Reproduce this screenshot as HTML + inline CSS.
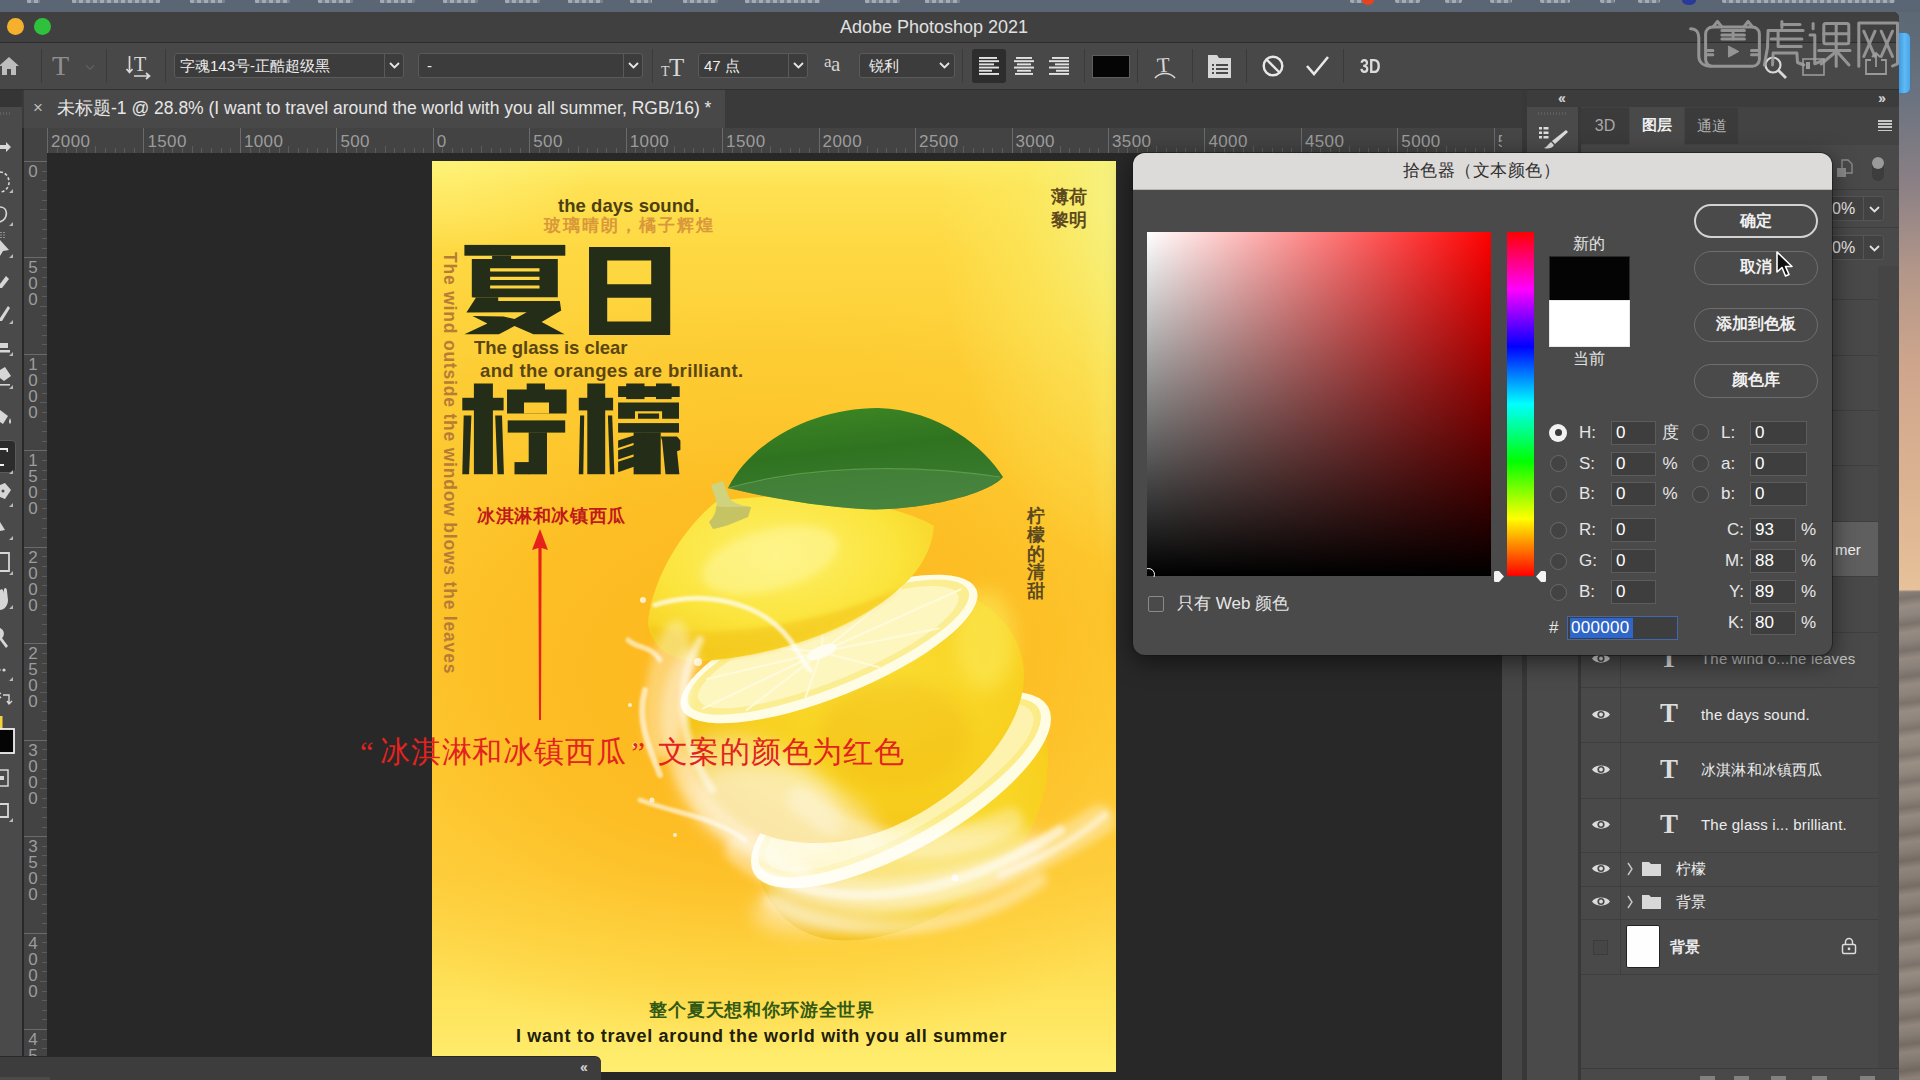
<!DOCTYPE html>
<html>
<head>
<meta charset="utf-8">
<title>Adobe Photoshop 2021</title>
<style>
*{margin:0;padding:0;box-sizing:border-box;}
html,body{width:1920px;height:1080px;overflow:hidden;background:#282828;}
body{font-family:"Liberation Sans",sans-serif;position:relative;color:#ddd;}
.abs{position:absolute;}
#desk{left:0;top:0;width:1920px;height:1080px;background:#5d6976;}
#menubar{left:0;top:0;width:1920px;height:12px;background:#5a6673;overflow:hidden;}
#win{left:0;top:12px;width:1899px;height:1068px;background:#282828;border-top-right-radius:6px;overflow:hidden;}
#titlebar{left:0;top:0;width:1899px;height:31px;background:#404040;border-bottom:1px solid #2c2c2c;}
#title{left:0;top:5px;width:1868px;text-align:center;font-size:18px;color:#e0e0e0;}
.tl{width:17px;height:17px;border-radius:50%;top:6px;}
#optbar{left:0;top:31px;width:1899px;height:47px;background:#484848;border-bottom:1px solid #303030;}
.sep{width:1px;background:#3a3a3a;top:6px;height:34px;}
.dd{background:#3c3c3c;border:1px solid #5a5a5a;border-radius:3px;height:25px;top:10px;color:#eee;font-size:15px;line-height:23px;padding-left:5px;white-space:nowrap;overflow:hidden;}
.dd .arr{position:absolute;right:0;top:0;width:19px;height:23px;border-left:1px solid #5a5a5a;}
.dd .arr svg{position:absolute;left:4px;top:8px;}
#tabstrip{left:22px;top:78px;width:1504px;height:38px;background:#3a3a3a;}
#doctab{left:2px;top:0;width:701px;height:38px;background:#484848;font-size:17.5px;color:#e6e6e6;line-height:36px;white-space:nowrap;}
#toolbar{left:0;top:78px;width:22px;height:990px;background:#4a4a4a;overflow:hidden;}
#hruler{left:24px;top:116px;width:1478px;height:25px;background:#434343;overflow:hidden;}
#vruler{left:24px;top:141px;width:23px;height:904px;background:#434343;overflow:hidden;}
.hr-n{position:absolute;top:4px;font-size:17px;color:#9c9c9c;letter-spacing:0.4px;}
.hr-t{position:absolute;top:0;width:1px;height:25px;background:#6a6a6a;}
.vr-n{position:absolute;left:2px;font-size:17px;color:#9c9c9c;line-height:16px;width:14px;text-align:center;}
.vr-t{position:absolute;left:0;height:1px;width:23px;background:#6a6a6a;}
#canvas{left:47px;top:141px;width:1455px;height:904px;background:#282828;}
</style>
</head>
<body>
<div id="desk" class="abs"></div><!--DESK--><div class="abs" style="left:1899px;top:0;width:21px;height:1080px;background:linear-gradient(180deg,#5c6874 0%,#5f6a77 3%,#6b7380 9%,#8b8085 17%,#b29689 25%,#cfa68c 34%,#dcb391 45%,#e6c199 54.6%,#8f867f 54.8%,#8a817a 62%,#93897f 70%,#857b73 80%,#8e847b 90%,#80776f 100%);"></div>
<div class="abs" style="left:1899px;top:33px;width:11px;height:60px;background:linear-gradient(90deg,#3f9be0,#5fb9f4 50%,#4aa6e8);border-radius:0 5px 5px 0;box-shadow:0 0 2px #2f7fc0;"></div>
<div class="abs" style="left:1899px;top:590px;width:21px;height:490px;background:repeating-linear-gradient(172deg,rgba(60,50,45,0) 0px,rgba(60,50,45,0.22) 9px,rgba(190,175,160,0.18) 17px,rgba(60,50,45,0) 26px);"></div><!--/DESK-->
<div id="menubar" class="abs"><div class="abs" style="left:27px;top:-3px;width:13px;height:6px;background:repeating-linear-gradient(90deg,rgba(235,240,245,0.5) 0 4px,rgba(235,240,245,0.2) 4px 7px);border-radius:1px;filter:blur(0.6px);"></div><div class="abs" style="left:72px;top:-3px;width:88px;height:6px;background:repeating-linear-gradient(90deg,rgba(235,240,245,0.5) 0 4px,rgba(235,240,245,0.2) 4px 7px);border-radius:1px;filter:blur(0.6px);"></div><div class="abs" style="left:190px;top:-3px;width:35px;height:6px;background:repeating-linear-gradient(90deg,rgba(235,240,245,0.5) 0 4px,rgba(235,240,245,0.2) 4px 7px);border-radius:1px;filter:blur(0.6px);"></div><div class="abs" style="left:255px;top:-3px;width:35px;height:6px;background:repeating-linear-gradient(90deg,rgba(235,240,245,0.5) 0 4px,rgba(235,240,245,0.2) 4px 7px);border-radius:1px;filter:blur(0.6px);"></div><div class="abs" style="left:318px;top:-3px;width:35px;height:6px;background:repeating-linear-gradient(90deg,rgba(235,240,245,0.5) 0 4px,rgba(235,240,245,0.2) 4px 7px);border-radius:1px;filter:blur(0.6px);"></div><div class="abs" style="left:380px;top:-3px;width:35px;height:6px;background:repeating-linear-gradient(90deg,rgba(235,240,245,0.5) 0 4px,rgba(235,240,245,0.2) 4px 7px);border-radius:1px;filter:blur(0.6px);"></div><div class="abs" style="left:443px;top:-3px;width:35px;height:6px;background:repeating-linear-gradient(90deg,rgba(235,240,245,0.5) 0 4px,rgba(235,240,245,0.2) 4px 7px);border-radius:1px;filter:blur(0.6px);"></div><div class="abs" style="left:505px;top:-3px;width:35px;height:6px;background:repeating-linear-gradient(90deg,rgba(235,240,245,0.5) 0 4px,rgba(235,240,245,0.2) 4px 7px);border-radius:1px;filter:blur(0.6px);"></div><div class="abs" style="left:568px;top:-3px;width:35px;height:6px;background:repeating-linear-gradient(90deg,rgba(235,240,245,0.5) 0 4px,rgba(235,240,245,0.2) 4px 7px);border-radius:1px;filter:blur(0.6px);"></div><div class="abs" style="left:630px;top:-3px;width:22px;height:6px;background:repeating-linear-gradient(90deg,rgba(235,240,245,0.5) 0 4px,rgba(235,240,245,0.2) 4px 7px);border-radius:1px;filter:blur(0.6px);"></div><div class="abs" style="left:683px;top:-3px;width:35px;height:6px;background:repeating-linear-gradient(90deg,rgba(235,240,245,0.5) 0 4px,rgba(235,240,245,0.2) 4px 7px);border-radius:1px;filter:blur(0.6px);"></div><div class="abs" style="left:745px;top:-3px;width:75px;height:6px;background:repeating-linear-gradient(90deg,rgba(235,240,245,0.5) 0 4px,rgba(235,240,245,0.2) 4px 7px);border-radius:1px;filter:blur(0.6px);"></div><div class="abs" style="left:865px;top:-3px;width:35px;height:6px;background:repeating-linear-gradient(90deg,rgba(235,240,245,0.5) 0 4px,rgba(235,240,245,0.2) 4px 7px);border-radius:1px;filter:blur(0.6px);"></div><div class="abs" style="left:925px;top:-3px;width:35px;height:6px;background:repeating-linear-gradient(90deg,rgba(235,240,245,0.5) 0 4px,rgba(235,240,245,0.2) 4px 7px);border-radius:1px;filter:blur(0.6px);"></div><div class="abs" style="left:1350px;top:-3px;width:18px;height:6px;background:repeating-linear-gradient(90deg,rgba(235,240,245,0.5) 0 4px,rgba(235,240,245,0.2) 4px 7px);border-radius:2px;filter:blur(0.6px);"></div><div class="abs" style="left:1395px;top:-3px;width:25px;height:6px;background:repeating-linear-gradient(90deg,rgba(235,240,245,0.5) 0 4px,rgba(235,240,245,0.2) 4px 7px);border-radius:2px;filter:blur(0.6px);"></div><div class="abs" style="left:1445px;top:-3px;width:17px;height:6px;background:repeating-linear-gradient(90deg,rgba(235,240,245,0.5) 0 4px,rgba(235,240,245,0.2) 4px 7px);border-radius:2px;filter:blur(0.6px);"></div><div class="abs" style="left:1490px;top:-3px;width:22px;height:6px;background:repeating-linear-gradient(90deg,rgba(235,240,245,0.5) 0 4px,rgba(235,240,245,0.2) 4px 7px);border-radius:2px;filter:blur(0.6px);"></div><div class="abs" style="left:1540px;top:-3px;width:30px;height:6px;background:repeating-linear-gradient(90deg,rgba(235,240,245,0.5) 0 4px,rgba(235,240,245,0.2) 4px 7px);border-radius:2px;filter:blur(0.6px);"></div><div class="abs" style="left:1600px;top:-3px;width:15px;height:6px;background:repeating-linear-gradient(90deg,rgba(235,240,245,0.5) 0 4px,rgba(235,240,245,0.2) 4px 7px);border-radius:2px;filter:blur(0.6px);"></div><div class="abs" style="left:1638px;top:-3px;width:22px;height:6px;background:repeating-linear-gradient(90deg,rgba(235,240,245,0.5) 0 4px,rgba(235,240,245,0.2) 4px 7px);border-radius:2px;filter:blur(0.6px);"></div><div class="abs" style="left:1722px;top:-3px;width:173px;height:6px;background:repeating-linear-gradient(90deg,rgba(235,240,245,0.5) 0 4px,rgba(235,240,245,0.2) 4px 7px);border-radius:2px;filter:blur(0.6px);"></div><div class="abs" style="left:1362px;top:-5px;width:12px;height:10px;border-radius:50%;background:#e8431f;"></div><div class="abs" style="left:1682px;top:-4px;width:14px;height:9px;border-radius:50%;background:#2a3a9a;"></div></div><!--/MB-->
<div id="win" class="abs">
  <div id="titlebar" class="abs">
    <div class="abs tl" style="left:7px;background:#f5b12d;"></div>
    <div class="abs tl" style="left:34px;background:#2fc13c;"></div>
    <div class="abs tl" style="left:-21px;background:#ee5d55;"></div>
    <div id="title" class="abs">Adobe Photoshop 2021</div>
  </div>
  <div id="optbar" class="abs"><!--OPT--><svg class="abs" style="left:-2px;top:12px" width="22" height="22" viewBox="0 0 22 22"><path d="M11,2 L21,11 L18,11 L18,20 L13,20 L13,14 L9,14 L9,20 L4,20 L4,11 L1,11 Z" fill="#bdbdbd"/></svg><div class="abs sep" style="left:41px"></div><div class="abs sep" style="left:106px"></div><div class="abs sep" style="left:165px"></div><div class="abs sep" style="left:652px"></div><div class="abs sep" style="left:962px"></div><div class="abs sep" style="left:1084px"></div><div class="abs sep" style="left:1137px"></div><div class="abs sep" style="left:1192px"></div><div class="abs sep" style="left:1246px"></div><div class="abs sep" style="left:1343px"></div><div class="abs" style="left:52px;top:7px;font-family:'Liberation Serif',serif;font-size:28px;color:#8f8f8f;line-height:32px;">T</div><svg class="abs" style="left:85px;top:21px" width="10" height="7" viewBox="0 0 11 7"><path d="M1,1 L5.5,5.5 L10,1" stroke="#5e5e5e" stroke-width="1.6" fill="none"/></svg><svg class="abs" style="left:125px;top:11px" width="28" height="26" viewBox="0 0 28 26"><g stroke="#d8d8d8" fill="none" stroke-width="1.7"><path d="M4.5,2 V18 M1.5,15 L4.5,18.5 L7.5,15"/><path d="M9,22 H24 M21,19 L24.5,22 L21,25"/></g><text x="9" y="17" font-family="Liberation Serif" font-size="20" fill="#d8d8d8">T</text></svg><div class="abs dd" style="left:174px;width:230px;">字魂143号-正酷超级黑<span class="arr" style="width:19px;"><svg width="11" height="7" viewBox="0 0 11 7"><path d="M1,1 L5.5,5.5 L10,1" stroke="#e6e6e6" stroke-width="1.8" fill="none"/></svg></span></div><div class="abs dd" style="left:418px;width:225px;"><span style="padding-left:3px">-</span><span class="arr" style="width:19px;"><svg width="11" height="7" viewBox="0 0 11 7"><path d="M1,1 L5.5,5.5 L10,1" stroke="#e6e6e6" stroke-width="1.8" fill="none"/></svg></span></div><svg class="abs" style="left:660px;top:12px" width="28" height="24" viewBox="0 0 28 24"><text x="1" y="21" font-family="Liberation Serif" font-size="14" fill="#d8d8d8">T</text><text x="9" y="21" font-family="Liberation Serif" font-size="25" fill="#d8d8d8">T</text></svg><div class="abs dd" style="left:698px;width:110px;">47 点<span class="arr" style="width:19px;"><svg width="11" height="7" viewBox="0 0 11 7"><path d="M1,1 L5.5,5.5 L10,1" stroke="#e6e6e6" stroke-width="1.8" fill="none"/></svg></span></div><div class="abs" style="left:824px;top:9px;font-family:'Liberation Serif',serif;font-size:21px;color:#d4d4d4;line-height:24px;letter-spacing:-0.5px;"><span style="font-size:17px;position:relative;top:-4px">a</span>a</div><div class="abs dd" style="left:859px;width:96px;"><span style="padding-left:4px">锐利</span><span class="arr" style="width:19px;border-left:none;"><svg width="11" height="7" viewBox="0 0 11 7"><path d="M1,1 L5.5,5.5 L10,1" stroke="#e6e6e6" stroke-width="1.8" fill="none"/></svg></span></div><div class="abs" style="left:972px;top:6px;width:34px;height:34px;background:#2d2d2d;border-radius:3px;"></div><svg class="abs" style="left:978px;top:13px" width="22" height="22" viewBox="0 0 22 22"><g fill="#e2e2e2"><rect x="1" y="1.0" width="18" height="1.9"/><rect x="1" y="4.2" width="20" height="1.9"/><rect x="1" y="7.4" width="15" height="1.9"/><rect x="1" y="10.6" width="20" height="1.9"/><rect x="1" y="13.8" width="13" height="1.9"/><rect x="1" y="17.0" width="20" height="1.9"/></g></svg><svg class="abs" style="left:1013px;top:13px" width="22" height="22" viewBox="0 0 22 22"><g fill="#e2e2e2"><rect x="3.0" y="1.0" width="16" height="1.9"/><rect x="1.0" y="4.2" width="20" height="1.9"/><rect x="4.0" y="7.4" width="14" height="1.9"/><rect x="1.0" y="10.6" width="20" height="1.9"/><rect x="4.0" y="13.8" width="14" height="1.9"/><rect x="2.0" y="17.0" width="18" height="1.9"/></g></svg><svg class="abs" style="left:1048px;top:13px" width="22" height="22" viewBox="0 0 22 22"><g fill="#e2e2e2"><rect x="4" y="1.0" width="17" height="1.9"/><rect x="1" y="4.2" width="20" height="1.9"/><rect x="7" y="7.4" width="14" height="1.9"/><rect x="1" y="10.6" width="20" height="1.9"/><rect x="8" y="13.8" width="13" height="1.9"/><rect x="1" y="17.0" width="20" height="1.9"/></g></svg><div class="abs" style="left:1092px;top:12px;width:38px;height:23px;background:#050505;border:1px solid #5e5e5e;"></div><svg class="abs" style="left:1152px;top:10px" width="26" height="28" viewBox="0 0 26 28"><text x="5" y="19" font-family="Liberation Serif" font-size="21" fill="#d8d8d8" transform="rotate(-4 12 12)">T</text><path d="M3,25 C8,19 18,19 23,25" stroke="#d8d8d8" stroke-width="1.6" fill="none"/></svg><svg class="abs" style="left:1207px;top:11px" width="25" height="25" viewBox="0 0 25 25"><path d="M1,1 H10 L12,4 H24 V24 H1 Z" fill="#d6d6d6"/><g fill="#484848"><rect x="5" y="10" width="2" height="2"/><rect x="9" y="10" width="12" height="2"/><rect x="5" y="14" width="2" height="2"/><rect x="9" y="14" width="12" height="2"/><rect x="5" y="18" width="2" height="2"/><rect x="9" y="18" width="12" height="2"/></g></svg><svg class="abs" style="left:1261px;top:11px" width="24" height="24" viewBox="0 0 24 24"><circle cx="12" cy="12" r="9.3" stroke="#e8e8e8" stroke-width="2.4" fill="none"/><path d="M5.5,5.5 L18.5,18.5" stroke="#e8e8e8" stroke-width="2.4"/></svg><svg class="abs" style="left:1305px;top:12px" width="26" height="22" viewBox="0 0 26 22"><path d="M2,11 L9,19 L23,2" stroke="#e8e8e8" stroke-width="2.6" fill="none"/></svg><div class="abs" style="left:1360px;top:10px;font-size:20px;font-weight:bold;color:#dcdcdc;line-height:26px;transform:scaleX(0.8);transform-origin:0 0;">3D</div><svg class="abs" style="left:1762px;top:11px" width="26" height="26" viewBox="0 0 26 26"><circle cx="11" cy="11" r="7.5" stroke="#d8d8d8" stroke-width="2.2" fill="none"/><path d="M16.5,16.5 L24,24" stroke="#d8d8d8" stroke-width="2.8"/></svg><svg class="abs" style="left:1802px;top:14px" width="24" height="20" viewBox="0 0 24 20"><rect x="1" y="2" width="21" height="16" stroke="#9a9a9a" stroke-width="1.6" fill="none"/><rect x="4" y="5" width="4" height="7" fill="#9a9a9a"/></svg><svg class="abs" style="left:1864px;top:7px" width="24" height="26" viewBox="0 0 24 26"><path d="M7,10 H2 V24 H22 V10 H17" stroke="#9a9a9a" stroke-width="1.8" fill="none"/><path d="M12,17 V3 M8,7 L12,3 L16,7" stroke="#9a9a9a" stroke-width="1.8" fill="none"/></svg><!--/OPT--></div>
  <div id="toolbar" class="abs"><!--TOOLS--><div class="abs" style="left:0;top:0;width:22px;height:17px;background:#353535;"></div><div class="abs" style="left:0;top:22px;width:10px;height:3px;background:repeating-linear-gradient(90deg,#606060 0 1px,transparent 1px 3px);"></div><div class="abs" style="left:-4px;top:350px;width:20px;height:33px;background:#2c2c2c;border-radius:4px;border:1px solid #5a5a5a;"></div><svg class="abs" style="left:0;top:0" width="22" height="990" viewBox="0 90 22 990"><g fill="#d6d6d6" stroke="none"><path d="M0,145 H6 V142 L11,147 L6,152 V149 H0Z"/><path d="M0,172 a9,10 0 0 1 0,20" fill="none" stroke="#d6d6d6" stroke-width="1.6" stroke-dasharray="3 2"/><path d="M0,207 C8,207 9,218 0,222" fill="none" stroke="#d6d6d6" stroke-width="1.7"/><path d="M0,240 L9,250 L3,251 L0,256Z"/><path d="M1,232 V238 M4,232 V238" stroke="#d6d6d6" stroke-width="1" stroke-dasharray="1 1.5"/><path d="M0,284 L6,276 L9,279 L2,288 L0,288Z"/><path d="M0,318 L8,306 L10,308 L2,321 L0,321Z"/><rect x="0" y="343" width="8" height="5"/><rect x="0" y="350" width="10" height="2.5"/><path d="M0,370 L5,367 L11,376 L4,381 L0,378Z"/><rect x="0" y="384" width="10" height="1.6"/><path d="M0,410 L8,416 L3,424 L0,422Z"/><path d="M10,418 q2,4 0,6 q-2,-2 0,-6Z"/><path d="M0,448 H8 V452 H6.5 V450 H0Z M0,464 H4 V466 H0Z" fill="#f0f0f0"/><path d="M0,485 L5,483 L11,490 L5,499 L0,497Z"/><circle cx="3" cy="491" r="1.5" fill="#4a4a4a"/><path d="M0,522 L5,530 L0,531Z"/><path d="M0,553 H9 V571 H0" fill="none" stroke="#d6d6d6" stroke-width="1.8"/><path d="M0,590 C2,588 4,590 4,594 L4,589 C5,587 7,588 7,591 L8,600 C8,606 4,610 0,610Z"/><path d="M0,628 a6,6 0 0 1 2,10 L8,646 L6,648 L0,640Z"/><circle cx="4" cy="670" r="1.6"/><circle cx="-1" cy="670" r="1.6"/><path d="M3,695 H9 V703 M1,693 L-2,695 L1,698 M7,701 L9,704 L12,701" fill="none" stroke="#d6d6d6" stroke-width="1.4"/><rect x="0" y="716" width="2.5" height="20" fill="#f3d33c"/><rect x="-3" y="729" width="17" height="24" fill="#050505" stroke="#f0f0f0" stroke-width="1.8"/><rect x="-4" y="770" width="12" height="16" fill="none" stroke="#d6d6d6" stroke-width="1.5"/><rect x="0" y="776" width="4" height="4"/><path d="M0,804 H8 V817 H0" fill="none" stroke="#d6d6d6" stroke-width="1.8"/><path d="M13,193 L13,189 L9,193Z" fill="#b8b8b8"/><path d="M13,226 L13,222 L9,226Z" fill="#b8b8b8"/><path d="M13,258 L13,254 L9,258Z" fill="#b8b8b8"/><path d="M13,324 L13,320 L9,324Z" fill="#b8b8b8"/><path d="M13,356 L13,352 L9,356Z" fill="#b8b8b8"/><path d="M13,389 L13,385 L9,389Z" fill="#b8b8b8"/><path d="M13,474 L13,470 L9,474Z" fill="#b8b8b8"/><path d="M13,507 L13,503 L9,507Z" fill="#b8b8b8"/><path d="M13,540 L13,536 L9,540Z" fill="#b8b8b8"/><path d="M13,575 L13,571 L9,575Z" fill="#b8b8b8"/><path d="M13,609 L13,605 L9,609Z" fill="#b8b8b8"/><path d="M13,681 L13,677 L9,681Z" fill="#b8b8b8"/><path d="M13,822 L13,818 L9,822Z" fill="#b8b8b8"/></g></svg><!--/TOOLS--></div>
  <div id="tabstrip" class="abs">
    <div id="doctab" class="abs"><span style="position:absolute;left:9px;top:0;color:#bdbdbd;font-size:17px;">×</span><span style="position:absolute;left:33px;top:0;">未标题-1 @ 28.8% (I want to travel around the world with you all summer, RGB/16) *</span></div>
  </div>
  <div id="hruler" class="abs"><!--HR--><div class="hr-t" style="left:23.0px"></div><div class="hr-n" style="left:27.0px">2000</div><div class="hr-t" style="left:32.6px;top:20px;height:5px;background:#5c5c5c"></div><div class="hr-t" style="left:42.3px;top:20px;height:5px;background:#5c5c5c"></div><div class="hr-t" style="left:51.9px;top:20px;height:5px;background:#5c5c5c"></div><div class="hr-t" style="left:61.6px;top:20px;height:5px;background:#5c5c5c"></div><div class="hr-t" style="left:71.2px;top:18px;height:7px;background:#5c5c5c"></div><div class="hr-t" style="left:80.9px;top:20px;height:5px;background:#5c5c5c"></div><div class="hr-t" style="left:90.5px;top:20px;height:5px;background:#5c5c5c"></div><div class="hr-t" style="left:100.2px;top:20px;height:5px;background:#5c5c5c"></div><div class="hr-t" style="left:109.8px;top:20px;height:5px;background:#5c5c5c"></div><div class="hr-t" style="left:119.4px"></div><div class="hr-n" style="left:123.4px">1500</div><div class="hr-t" style="left:129.1px;top:20px;height:5px;background:#5c5c5c"></div><div class="hr-t" style="left:138.7px;top:20px;height:5px;background:#5c5c5c"></div><div class="hr-t" style="left:148.4px;top:20px;height:5px;background:#5c5c5c"></div><div class="hr-t" style="left:158.0px;top:20px;height:5px;background:#5c5c5c"></div><div class="hr-t" style="left:167.7px;top:18px;height:7px;background:#5c5c5c"></div><div class="hr-t" style="left:177.3px;top:20px;height:5px;background:#5c5c5c"></div><div class="hr-t" style="left:187.0px;top:20px;height:5px;background:#5c5c5c"></div><div class="hr-t" style="left:196.6px;top:20px;height:5px;background:#5c5c5c"></div><div class="hr-t" style="left:206.3px;top:20px;height:5px;background:#5c5c5c"></div><div class="hr-t" style="left:215.9px"></div><div class="hr-n" style="left:219.9px">1000</div><div class="hr-t" style="left:225.5px;top:20px;height:5px;background:#5c5c5c"></div><div class="hr-t" style="left:235.2px;top:20px;height:5px;background:#5c5c5c"></div><div class="hr-t" style="left:244.8px;top:20px;height:5px;background:#5c5c5c"></div><div class="hr-t" style="left:254.5px;top:20px;height:5px;background:#5c5c5c"></div><div class="hr-t" style="left:264.1px;top:18px;height:7px;background:#5c5c5c"></div><div class="hr-t" style="left:273.8px;top:20px;height:5px;background:#5c5c5c"></div><div class="hr-t" style="left:283.4px;top:20px;height:5px;background:#5c5c5c"></div><div class="hr-t" style="left:293.1px;top:20px;height:5px;background:#5c5c5c"></div><div class="hr-t" style="left:302.7px;top:20px;height:5px;background:#5c5c5c"></div><div class="hr-t" style="left:312.4px"></div><div class="hr-n" style="left:316.4px">500</div><div class="hr-t" style="left:322.0px;top:20px;height:5px;background:#5c5c5c"></div><div class="hr-t" style="left:331.6px;top:20px;height:5px;background:#5c5c5c"></div><div class="hr-t" style="left:341.3px;top:20px;height:5px;background:#5c5c5c"></div><div class="hr-t" style="left:350.9px;top:20px;height:5px;background:#5c5c5c"></div><div class="hr-t" style="left:360.6px;top:18px;height:7px;background:#5c5c5c"></div><div class="hr-t" style="left:370.2px;top:20px;height:5px;background:#5c5c5c"></div><div class="hr-t" style="left:379.9px;top:20px;height:5px;background:#5c5c5c"></div><div class="hr-t" style="left:389.5px;top:20px;height:5px;background:#5c5c5c"></div><div class="hr-t" style="left:399.2px;top:20px;height:5px;background:#5c5c5c"></div><div class="hr-t" style="left:408.8px"></div><div class="hr-n" style="left:412.8px">0</div><div class="hr-t" style="left:418.4px;top:20px;height:5px;background:#5c5c5c"></div><div class="hr-t" style="left:428.1px;top:20px;height:5px;background:#5c5c5c"></div><div class="hr-t" style="left:437.7px;top:20px;height:5px;background:#5c5c5c"></div><div class="hr-t" style="left:447.4px;top:20px;height:5px;background:#5c5c5c"></div><div class="hr-t" style="left:457.0px;top:18px;height:7px;background:#5c5c5c"></div><div class="hr-t" style="left:466.7px;top:20px;height:5px;background:#5c5c5c"></div><div class="hr-t" style="left:476.3px;top:20px;height:5px;background:#5c5c5c"></div><div class="hr-t" style="left:486.0px;top:20px;height:5px;background:#5c5c5c"></div><div class="hr-t" style="left:495.6px;top:20px;height:5px;background:#5c5c5c"></div><div class="hr-t" style="left:505.2px"></div><div class="hr-n" style="left:509.2px">500</div><div class="hr-t" style="left:514.9px;top:20px;height:5px;background:#5c5c5c"></div><div class="hr-t" style="left:524.5px;top:20px;height:5px;background:#5c5c5c"></div><div class="hr-t" style="left:534.2px;top:20px;height:5px;background:#5c5c5c"></div><div class="hr-t" style="left:543.8px;top:20px;height:5px;background:#5c5c5c"></div><div class="hr-t" style="left:553.5px;top:18px;height:7px;background:#5c5c5c"></div><div class="hr-t" style="left:563.1px;top:20px;height:5px;background:#5c5c5c"></div><div class="hr-t" style="left:572.8px;top:20px;height:5px;background:#5c5c5c"></div><div class="hr-t" style="left:582.4px;top:20px;height:5px;background:#5c5c5c"></div><div class="hr-t" style="left:592.1px;top:20px;height:5px;background:#5c5c5c"></div><div class="hr-t" style="left:601.7px"></div><div class="hr-n" style="left:605.7px">1000</div><div class="hr-t" style="left:611.3px;top:20px;height:5px;background:#5c5c5c"></div><div class="hr-t" style="left:621.0px;top:20px;height:5px;background:#5c5c5c"></div><div class="hr-t" style="left:630.6px;top:20px;height:5px;background:#5c5c5c"></div><div class="hr-t" style="left:640.3px;top:20px;height:5px;background:#5c5c5c"></div><div class="hr-t" style="left:649.9px;top:18px;height:7px;background:#5c5c5c"></div><div class="hr-t" style="left:659.6px;top:20px;height:5px;background:#5c5c5c"></div><div class="hr-t" style="left:669.2px;top:20px;height:5px;background:#5c5c5c"></div><div class="hr-t" style="left:678.9px;top:20px;height:5px;background:#5c5c5c"></div><div class="hr-t" style="left:688.5px;top:20px;height:5px;background:#5c5c5c"></div><div class="hr-t" style="left:698.1px"></div><div class="hr-n" style="left:702.1px">1500</div><div class="hr-t" style="left:707.8px;top:20px;height:5px;background:#5c5c5c"></div><div class="hr-t" style="left:717.4px;top:20px;height:5px;background:#5c5c5c"></div><div class="hr-t" style="left:727.1px;top:20px;height:5px;background:#5c5c5c"></div><div class="hr-t" style="left:736.7px;top:20px;height:5px;background:#5c5c5c"></div><div class="hr-t" style="left:746.4px;top:18px;height:7px;background:#5c5c5c"></div><div class="hr-t" style="left:756.0px;top:20px;height:5px;background:#5c5c5c"></div><div class="hr-t" style="left:765.7px;top:20px;height:5px;background:#5c5c5c"></div><div class="hr-t" style="left:775.3px;top:20px;height:5px;background:#5c5c5c"></div><div class="hr-t" style="left:785.0px;top:20px;height:5px;background:#5c5c5c"></div><div class="hr-t" style="left:794.6px"></div><div class="hr-n" style="left:798.6px">2000</div><div class="hr-t" style="left:804.2px;top:20px;height:5px;background:#5c5c5c"></div><div class="hr-t" style="left:813.9px;top:20px;height:5px;background:#5c5c5c"></div><div class="hr-t" style="left:823.5px;top:20px;height:5px;background:#5c5c5c"></div><div class="hr-t" style="left:833.2px;top:20px;height:5px;background:#5c5c5c"></div><div class="hr-t" style="left:842.8px;top:18px;height:7px;background:#5c5c5c"></div><div class="hr-t" style="left:852.5px;top:20px;height:5px;background:#5c5c5c"></div><div class="hr-t" style="left:862.1px;top:20px;height:5px;background:#5c5c5c"></div><div class="hr-t" style="left:871.8px;top:20px;height:5px;background:#5c5c5c"></div><div class="hr-t" style="left:881.4px;top:20px;height:5px;background:#5c5c5c"></div><div class="hr-t" style="left:891.1px"></div><div class="hr-n" style="left:895.1px">2500</div><div class="hr-t" style="left:900.7px;top:20px;height:5px;background:#5c5c5c"></div><div class="hr-t" style="left:910.3px;top:20px;height:5px;background:#5c5c5c"></div><div class="hr-t" style="left:920.0px;top:20px;height:5px;background:#5c5c5c"></div><div class="hr-t" style="left:929.6px;top:20px;height:5px;background:#5c5c5c"></div><div class="hr-t" style="left:939.3px;top:18px;height:7px;background:#5c5c5c"></div><div class="hr-t" style="left:948.9px;top:20px;height:5px;background:#5c5c5c"></div><div class="hr-t" style="left:958.6px;top:20px;height:5px;background:#5c5c5c"></div><div class="hr-t" style="left:968.2px;top:20px;height:5px;background:#5c5c5c"></div><div class="hr-t" style="left:977.9px;top:20px;height:5px;background:#5c5c5c"></div><div class="hr-t" style="left:987.5px"></div><div class="hr-n" style="left:991.5px">3000</div><div class="hr-t" style="left:997.1px;top:20px;height:5px;background:#5c5c5c"></div><div class="hr-t" style="left:1006.8px;top:20px;height:5px;background:#5c5c5c"></div><div class="hr-t" style="left:1016.4px;top:20px;height:5px;background:#5c5c5c"></div><div class="hr-t" style="left:1026.1px;top:20px;height:5px;background:#5c5c5c"></div><div class="hr-t" style="left:1035.7px;top:18px;height:7px;background:#5c5c5c"></div><div class="hr-t" style="left:1045.4px;top:20px;height:5px;background:#5c5c5c"></div><div class="hr-t" style="left:1055.0px;top:20px;height:5px;background:#5c5c5c"></div><div class="hr-t" style="left:1064.7px;top:20px;height:5px;background:#5c5c5c"></div><div class="hr-t" style="left:1074.3px;top:20px;height:5px;background:#5c5c5c"></div><div class="hr-t" style="left:1084.0px"></div><div class="hr-n" style="left:1088.0px">3500</div><div class="hr-t" style="left:1093.6px;top:20px;height:5px;background:#5c5c5c"></div><div class="hr-t" style="left:1103.2px;top:20px;height:5px;background:#5c5c5c"></div><div class="hr-t" style="left:1112.9px;top:20px;height:5px;background:#5c5c5c"></div><div class="hr-t" style="left:1122.5px;top:20px;height:5px;background:#5c5c5c"></div><div class="hr-t" style="left:1132.2px;top:18px;height:7px;background:#5c5c5c"></div><div class="hr-t" style="left:1141.8px;top:20px;height:5px;background:#5c5c5c"></div><div class="hr-t" style="left:1151.5px;top:20px;height:5px;background:#5c5c5c"></div><div class="hr-t" style="left:1161.1px;top:20px;height:5px;background:#5c5c5c"></div><div class="hr-t" style="left:1170.8px;top:20px;height:5px;background:#5c5c5c"></div><div class="hr-t" style="left:1180.4px"></div><div class="hr-n" style="left:1184.4px">4000</div><div class="hr-t" style="left:1190.0px;top:20px;height:5px;background:#5c5c5c"></div><div class="hr-t" style="left:1199.7px;top:20px;height:5px;background:#5c5c5c"></div><div class="hr-t" style="left:1209.3px;top:20px;height:5px;background:#5c5c5c"></div><div class="hr-t" style="left:1219.0px;top:20px;height:5px;background:#5c5c5c"></div><div class="hr-t" style="left:1228.6px;top:18px;height:7px;background:#5c5c5c"></div><div class="hr-t" style="left:1238.3px;top:20px;height:5px;background:#5c5c5c"></div><div class="hr-t" style="left:1247.9px;top:20px;height:5px;background:#5c5c5c"></div><div class="hr-t" style="left:1257.6px;top:20px;height:5px;background:#5c5c5c"></div><div class="hr-t" style="left:1267.2px;top:20px;height:5px;background:#5c5c5c"></div><div class="hr-t" style="left:1276.9px"></div><div class="hr-n" style="left:1280.9px">4500</div><div class="hr-t" style="left:1286.5px;top:20px;height:5px;background:#5c5c5c"></div><div class="hr-t" style="left:1296.1px;top:20px;height:5px;background:#5c5c5c"></div><div class="hr-t" style="left:1305.8px;top:20px;height:5px;background:#5c5c5c"></div><div class="hr-t" style="left:1315.4px;top:20px;height:5px;background:#5c5c5c"></div><div class="hr-t" style="left:1325.1px;top:18px;height:7px;background:#5c5c5c"></div><div class="hr-t" style="left:1334.7px;top:20px;height:5px;background:#5c5c5c"></div><div class="hr-t" style="left:1344.4px;top:20px;height:5px;background:#5c5c5c"></div><div class="hr-t" style="left:1354.0px;top:20px;height:5px;background:#5c5c5c"></div><div class="hr-t" style="left:1363.7px;top:20px;height:5px;background:#5c5c5c"></div><div class="hr-t" style="left:1373.3px"></div><div class="hr-n" style="left:1377.3px">5000</div><div class="hr-t" style="left:1382.9px;top:20px;height:5px;background:#5c5c5c"></div><div class="hr-t" style="left:1392.6px;top:20px;height:5px;background:#5c5c5c"></div><div class="hr-t" style="left:1402.2px;top:20px;height:5px;background:#5c5c5c"></div><div class="hr-t" style="left:1411.9px;top:20px;height:5px;background:#5c5c5c"></div><div class="hr-t" style="left:1421.5px;top:18px;height:7px;background:#5c5c5c"></div><div class="hr-t" style="left:1431.2px;top:20px;height:5px;background:#5c5c5c"></div><div class="hr-t" style="left:1440.8px;top:20px;height:5px;background:#5c5c5c"></div><div class="hr-t" style="left:1450.5px;top:20px;height:5px;background:#5c5c5c"></div><div class="hr-t" style="left:1460.1px;top:20px;height:5px;background:#5c5c5c"></div><div class="hr-t" style="left:1469.8px"></div><div class="hr-n" style="left:1473.8px">5</div><div class="hr-t" style="left:1479.4px;top:20px;height:5px;background:#5c5c5c"></div><div class="hr-t" style="left:1489.0px;top:20px;height:5px;background:#5c5c5c"></div><div class="hr-t" style="left:1498.7px;top:20px;height:5px;background:#5c5c5c"></div><div class="hr-t" style="left:1508.3px;top:20px;height:5px;background:#5c5c5c"></div><div class="hr-t" style="left:1518.0px;top:18px;height:7px;background:#5c5c5c"></div><div class="hr-t" style="left:1527.6px;top:20px;height:5px;background:#5c5c5c"></div><div class="hr-t" style="left:1537.3px;top:20px;height:5px;background:#5c5c5c"></div><div class="hr-t" style="left:1546.9px;top:20px;height:5px;background:#5c5c5c"></div><div class="hr-t" style="left:1556.6px;top:20px;height:5px;background:#5c5c5c"></div><!--/HR--></div>
  <div id="vruler" class="abs"><!--VR--><div class="vr-t" style="top:8.0px"></div><div class="vr-n" style="top:11.0px">0</div><div class="vr-t" style="top:17.6px;left:18px;width:5px;background:#5c5c5c"></div><div class="vr-t" style="top:27.3px;left:18px;width:5px;background:#5c5c5c"></div><div class="vr-t" style="top:36.9px;left:18px;width:5px;background:#5c5c5c"></div><div class="vr-t" style="top:46.6px;left:18px;width:5px;background:#5c5c5c"></div><div class="vr-t" style="top:56.2px;left:16px;width:7px;background:#5c5c5c"></div><div class="vr-t" style="top:65.9px;left:18px;width:5px;background:#5c5c5c"></div><div class="vr-t" style="top:75.5px;left:18px;width:5px;background:#5c5c5c"></div><div class="vr-t" style="top:85.2px;left:18px;width:5px;background:#5c5c5c"></div><div class="vr-t" style="top:94.8px;left:18px;width:5px;background:#5c5c5c"></div><div class="vr-t" style="top:104.4px"></div><div class="vr-n" style="top:107.4px">5<br>0<br>0</div><div class="vr-t" style="top:114.1px;left:18px;width:5px;background:#5c5c5c"></div><div class="vr-t" style="top:123.7px;left:18px;width:5px;background:#5c5c5c"></div><div class="vr-t" style="top:133.4px;left:18px;width:5px;background:#5c5c5c"></div><div class="vr-t" style="top:143.0px;left:18px;width:5px;background:#5c5c5c"></div><div class="vr-t" style="top:152.7px;left:16px;width:7px;background:#5c5c5c"></div><div class="vr-t" style="top:162.3px;left:18px;width:5px;background:#5c5c5c"></div><div class="vr-t" style="top:172.0px;left:18px;width:5px;background:#5c5c5c"></div><div class="vr-t" style="top:181.6px;left:18px;width:5px;background:#5c5c5c"></div><div class="vr-t" style="top:191.3px;left:18px;width:5px;background:#5c5c5c"></div><div class="vr-t" style="top:200.9px"></div><div class="vr-n" style="top:203.9px">1<br>0<br>0<br>0</div><div class="vr-t" style="top:210.5px;left:18px;width:5px;background:#5c5c5c"></div><div class="vr-t" style="top:220.2px;left:18px;width:5px;background:#5c5c5c"></div><div class="vr-t" style="top:229.8px;left:18px;width:5px;background:#5c5c5c"></div><div class="vr-t" style="top:239.5px;left:18px;width:5px;background:#5c5c5c"></div><div class="vr-t" style="top:249.1px;left:16px;width:7px;background:#5c5c5c"></div><div class="vr-t" style="top:258.8px;left:18px;width:5px;background:#5c5c5c"></div><div class="vr-t" style="top:268.4px;left:18px;width:5px;background:#5c5c5c"></div><div class="vr-t" style="top:278.1px;left:18px;width:5px;background:#5c5c5c"></div><div class="vr-t" style="top:287.7px;left:18px;width:5px;background:#5c5c5c"></div><div class="vr-t" style="top:297.4px"></div><div class="vr-n" style="top:300.4px">1<br>5<br>0<br>0</div><div class="vr-t" style="top:307.0px;left:18px;width:5px;background:#5c5c5c"></div><div class="vr-t" style="top:316.6px;left:18px;width:5px;background:#5c5c5c"></div><div class="vr-t" style="top:326.3px;left:18px;width:5px;background:#5c5c5c"></div><div class="vr-t" style="top:335.9px;left:18px;width:5px;background:#5c5c5c"></div><div class="vr-t" style="top:345.6px;left:16px;width:7px;background:#5c5c5c"></div><div class="vr-t" style="top:355.2px;left:18px;width:5px;background:#5c5c5c"></div><div class="vr-t" style="top:364.9px;left:18px;width:5px;background:#5c5c5c"></div><div class="vr-t" style="top:374.5px;left:18px;width:5px;background:#5c5c5c"></div><div class="vr-t" style="top:384.2px;left:18px;width:5px;background:#5c5c5c"></div><div class="vr-t" style="top:393.8px"></div><div class="vr-n" style="top:396.8px">2<br>0<br>0<br>0</div><div class="vr-t" style="top:403.4px;left:18px;width:5px;background:#5c5c5c"></div><div class="vr-t" style="top:413.1px;left:18px;width:5px;background:#5c5c5c"></div><div class="vr-t" style="top:422.7px;left:18px;width:5px;background:#5c5c5c"></div><div class="vr-t" style="top:432.4px;left:18px;width:5px;background:#5c5c5c"></div><div class="vr-t" style="top:442.0px;left:16px;width:7px;background:#5c5c5c"></div><div class="vr-t" style="top:451.7px;left:18px;width:5px;background:#5c5c5c"></div><div class="vr-t" style="top:461.3px;left:18px;width:5px;background:#5c5c5c"></div><div class="vr-t" style="top:471.0px;left:18px;width:5px;background:#5c5c5c"></div><div class="vr-t" style="top:480.6px;left:18px;width:5px;background:#5c5c5c"></div><div class="vr-t" style="top:490.2px"></div><div class="vr-n" style="top:493.2px">2<br>5<br>0<br>0</div><div class="vr-t" style="top:499.9px;left:18px;width:5px;background:#5c5c5c"></div><div class="vr-t" style="top:509.5px;left:18px;width:5px;background:#5c5c5c"></div><div class="vr-t" style="top:519.2px;left:18px;width:5px;background:#5c5c5c"></div><div class="vr-t" style="top:528.8px;left:18px;width:5px;background:#5c5c5c"></div><div class="vr-t" style="top:538.5px;left:16px;width:7px;background:#5c5c5c"></div><div class="vr-t" style="top:548.1px;left:18px;width:5px;background:#5c5c5c"></div><div class="vr-t" style="top:557.8px;left:18px;width:5px;background:#5c5c5c"></div><div class="vr-t" style="top:567.4px;left:18px;width:5px;background:#5c5c5c"></div><div class="vr-t" style="top:577.1px;left:18px;width:5px;background:#5c5c5c"></div><div class="vr-t" style="top:586.7px"></div><div class="vr-n" style="top:589.7px">3<br>0<br>0<br>0</div><div class="vr-t" style="top:596.3px;left:18px;width:5px;background:#5c5c5c"></div><div class="vr-t" style="top:606.0px;left:18px;width:5px;background:#5c5c5c"></div><div class="vr-t" style="top:615.6px;left:18px;width:5px;background:#5c5c5c"></div><div class="vr-t" style="top:625.3px;left:18px;width:5px;background:#5c5c5c"></div><div class="vr-t" style="top:634.9px;left:16px;width:7px;background:#5c5c5c"></div><div class="vr-t" style="top:644.6px;left:18px;width:5px;background:#5c5c5c"></div><div class="vr-t" style="top:654.2px;left:18px;width:5px;background:#5c5c5c"></div><div class="vr-t" style="top:663.9px;left:18px;width:5px;background:#5c5c5c"></div><div class="vr-t" style="top:673.5px;left:18px;width:5px;background:#5c5c5c"></div><div class="vr-t" style="top:683.1px"></div><div class="vr-n" style="top:686.1px">3<br>5<br>0<br>0</div><div class="vr-t" style="top:692.8px;left:18px;width:5px;background:#5c5c5c"></div><div class="vr-t" style="top:702.4px;left:18px;width:5px;background:#5c5c5c"></div><div class="vr-t" style="top:712.1px;left:18px;width:5px;background:#5c5c5c"></div><div class="vr-t" style="top:721.7px;left:18px;width:5px;background:#5c5c5c"></div><div class="vr-t" style="top:731.4px;left:16px;width:7px;background:#5c5c5c"></div><div class="vr-t" style="top:741.0px;left:18px;width:5px;background:#5c5c5c"></div><div class="vr-t" style="top:750.7px;left:18px;width:5px;background:#5c5c5c"></div><div class="vr-t" style="top:760.3px;left:18px;width:5px;background:#5c5c5c"></div><div class="vr-t" style="top:770.0px;left:18px;width:5px;background:#5c5c5c"></div><div class="vr-t" style="top:779.6px"></div><div class="vr-n" style="top:782.6px">4<br>0<br>0<br>0</div><div class="vr-t" style="top:789.2px;left:18px;width:5px;background:#5c5c5c"></div><div class="vr-t" style="top:798.9px;left:18px;width:5px;background:#5c5c5c"></div><div class="vr-t" style="top:808.5px;left:18px;width:5px;background:#5c5c5c"></div><div class="vr-t" style="top:818.2px;left:18px;width:5px;background:#5c5c5c"></div><div class="vr-t" style="top:827.8px;left:16px;width:7px;background:#5c5c5c"></div><div class="vr-t" style="top:837.5px;left:18px;width:5px;background:#5c5c5c"></div><div class="vr-t" style="top:847.1px;left:18px;width:5px;background:#5c5c5c"></div><div class="vr-t" style="top:856.8px;left:18px;width:5px;background:#5c5c5c"></div><div class="vr-t" style="top:866.4px;left:18px;width:5px;background:#5c5c5c"></div><div class="vr-t" style="top:876.1px"></div><div class="vr-n" style="top:879.1px">4<br>5</div><div class="vr-t" style="top:885.7px;left:18px;width:5px;background:#5c5c5c"></div><div class="vr-t" style="top:895.3px;left:18px;width:5px;background:#5c5c5c"></div><div class="vr-t" style="top:905.0px;left:18px;width:5px;background:#5c5c5c"></div><div class="vr-t" style="top:914.6px;left:18px;width:5px;background:#5c5c5c"></div><div class="vr-t" style="top:924.3px;left:16px;width:7px;background:#5c5c5c"></div><div class="vr-t" style="top:933.9px;left:18px;width:5px;background:#5c5c5c"></div><div class="vr-t" style="top:943.6px;left:18px;width:5px;background:#5c5c5c"></div><div class="vr-t" style="top:953.2px;left:18px;width:5px;background:#5c5c5c"></div><div class="vr-t" style="top:962.9px;left:18px;width:5px;background:#5c5c5c"></div><!--/VR--></div>
  <div id="canvas" class="abs"></div>
  <!--POSTER_START-->
<div id="poster" class="abs" style="left:432px;top:149px;width:684px;height:911px;overflow:hidden;background:
radial-gradient(ellipse 78% 42% at 48% 56%, #fdb71e 0%, #fdbd24 45%, rgba(253,198,43,0.55) 72%, rgba(253,210,60,0) 100%),
linear-gradient(180deg,#fdec66 0%,#fee152 3%,#fed842 10%,#fdcd35 24%,#fdc62f 50%,#fed044 78%,#fee056 90%,#ffee70 100%);">
<div class="abs" style="left:0;top:0;width:684px;height:911px;background:radial-gradient(ellipse 24% 10% at 0% 0%,rgba(255,245,125,0.75),rgba(255,245,125,0) 100%),radial-gradient(ellipse 26% 40% at 100% 4%,rgba(246,242,128,0.95) 0%,rgba(250,236,100,0.55) 50%,rgba(253,222,72,0) 100%),radial-gradient(ellipse 5% 38% at 100% 10%,rgba(246,240,125,0.6) 0%,rgba(246,240,125,0) 100%);"></div>
<svg class="abs" style="left:0;top:0" width="684" height="911" viewBox="432 161 684 911">
<defs>
<radialGradient id="lem1" cx="0.45" cy="0.35" r="0.7"><stop offset="0" stop-color="#fdf06a"/><stop offset="0.6" stop-color="#fbe43c"/><stop offset="1" stop-color="#f6cf20"/></radialGradient>
<radialGradient id="lem2" cx="0.6" cy="0.4" r="0.75"><stop offset="0" stop-color="#fade33"/><stop offset="0.55" stop-color="#f8d01f"/><stop offset="1" stop-color="#f2b910"/></radialGradient>
<linearGradient id="leaf" x1="0" y1="0" x2="0.3" y2="1"><stop offset="0" stop-color="#3f8a24"/><stop offset="0.5" stop-color="#2f7320"/><stop offset="1" stop-color="#3c7c33"/></linearGradient>
<filter id="b2" x="-50%" y="-50%" width="200%" height="200%"><feGaussianBlur stdDeviation="2"/></filter>
<filter id="b4" x="-50%" y="-50%" width="200%" height="200%"><feGaussianBlur stdDeviation="4"/></filter>
<filter id="b8" x="-50%" y="-50%" width="200%" height="200%"><feGaussianBlur stdDeviation="9"/></filter><filter id="b1" x="-50%" y="-50%" width="200%" height="200%"><feGaussianBlur stdDeviation="0.8"/></filter>
</defs>
<!--LEMON--><!-- bottom slice rind + face -->
<g>
<path d="M1030,704 C1056,730 1054,795 1022,845 C985,900 900,945 835,940 C795,936 768,910 757,872 C850,870 980,800 1030,704Z" fill="url(#lem2)"/>
<g transform="translate(901,790) rotate(-29.5)"><ellipse rx="169" ry="60" fill="#fffce4"/><ellipse cx="0" cy="-3" rx="160" ry="50" fill="#fbec88"/><ellipse cx="0" cy="-3" rx="152" ry="44" fill="#fdf4b4" opacity="0.9"/></g>
</g>
<!-- body -->
<path d="M683,708 C700,640 800,580 900,580 C975,580 1024,625 1024,675 C1024,732 965,798 885,830 C815,857 735,842 702,786 C688,762 682,735 683,708Z" fill="url(#lem2)"/>
<ellipse cx="895" cy="735" rx="75" ry="55" fill="#f0b00c" opacity="0.33" filter="url(#b8)"/><ellipse cx="985" cy="640" rx="30" ry="50" fill="#fcea58" opacity="0.6" filter="url(#b8)"/>
<!-- middle slice face -->
<g transform="translate(829,649) rotate(-22)"><ellipse rx="159" ry="48" fill="#fffce6"/><ellipse cx="0" cy="-2" rx="151" ry="40" fill="#fbee92"/><ellipse cx="0" cy="-2" rx="140" ry="34" fill="#fdf6c2" opacity="0.95"/>
<g stroke="#fffbe0" stroke-width="2" opacity="0.9"><line x1="-8" y1="0" x2="-140" y2="8"/><line x1="-8" y1="0" x2="-100" y2="26"/><line x1="-8" y1="0" x2="-40" y2="36"/><line x1="-8" y1="0" x2="40" y2="36"/><line x1="-8" y1="0" x2="110" y2="22"/><line x1="-8" y1="0" x2="145" y2="-6"/><line x1="-8" y1="0" x2="90" y2="-30"/><line x1="-8" y1="0" x2="10" y2="-38"/><line x1="-8" y1="0" x2="-70" y2="-32"/><line x1="-8" y1="0" x2="-125" y2="-18"/></g>
<ellipse cx="-8" cy="0" rx="16" ry="6" fill="#fffdf0"/></g>
<!-- top cap -->
<path d="M716,502 C760,492 880,494 934,526 C932,552 917,574 900,588 C866,620 795,654 702,661 C672,663 651,646 648,624 C650,585 680,530 716,502Z" fill="url(#lem1)"/>
<ellipse cx="770" cy="560" rx="70" ry="30" fill="#fff8a0" opacity="0.55" filter="url(#b4)" transform="rotate(-15 770 560)"/>
<path d="M900,588 C866,620 795,654 702,661 C672,663 651,646 648,624 C700,644 822,624 900,588Z" fill="#f3c117" opacity="0.5" filter="url(#b2)"/>
<!-- stem -->
<path d="M711,485 L723,481 L729,497 C731,503 740,505 751,507 L748,517 C738,521 725,527 713,529 L709,522 C716,515 718,508 716,500 Z" fill="#d0d37e"/>
<path d="M716,506 C724,508 738,506 751,507 L748,517 C738,521 725,527 713,529 L709,522 C714,517 716,512 716,506Z" fill="#bdb651" opacity="0.55"/>
<!-- leaf -->
<path d="M728,488 C752,440 815,408 878,408 C940,410 985,448 1003,477 C985,498 905,512 862,509 C812,506 765,497 728,488Z" fill="url(#leaf)"/>
<path d="M728,488 C800,470 900,462 1003,477 C985,498 905,512 862,509 C812,506 765,497 728,488Z" fill="#4f8a48" opacity="0.5"/>
<path d="M728,488 C800,468 900,462 1000,477" stroke="#5a9a4a" stroke-width="1.2" fill="none"/>
<!-- water film -->
<ellipse cx="790" cy="815" rx="95" ry="42" fill="#fff" opacity="0.4" filter="url(#b8)" transform="rotate(18 790 815)"/>
<ellipse cx="760" cy="800" rx="90" ry="55" fill="#fff" opacity="0.38" filter="url(#b8)" transform="rotate(30 760 800)"/>
<ellipse cx="900" cy="880" rx="150" ry="40" fill="#fff" opacity="0.42" filter="url(#b8)" transform="rotate(-14 900 880)"/>
<ellipse cx="668" cy="690" rx="22" ry="70" fill="#fff" opacity="0.35" filter="url(#b4)" transform="rotate(8 668 690)"/>
<!-- water splash -->
<g fill="none" stroke="#ffffff" stroke-linecap="round">
<path d="M690,660 C660,700 670,760 700,800 C720,830 760,850 800,870" stroke-width="22" opacity="0.35" filter="url(#b4)"/>
<path d="M700,640 C672,690 680,740 712,790" stroke-width="8" opacity="0.55" filter="url(#b2)"/>
<path d="M740,850 C820,915 960,910 1100,820" stroke-width="30" opacity="0.38" filter="url(#b4)"/>
<path d="M760,872 C850,915 960,895 1060,830" stroke-width="10" opacity="0.55" filter="url(#b2)"/>
<path d="M770,900 C850,945 960,935 1040,880" stroke-width="14" opacity="0.4" filter="url(#b4)"/>
<path d="M800,800 C860,850 940,860 1010,820" stroke-width="26" opacity="0.3" filter="url(#b4)"/>
<path d="M655,605 C700,590 760,600 790,640 C800,655 805,665 810,670" stroke-width="5" opacity="0.7" filter="url(#b1)"/>
<path d="M645,690 C636,720 650,750 660,775" stroke-width="6" opacity="0.6" filter="url(#b1)"/>
<path d="M628,640 C640,650 650,645 660,660" stroke-width="5" opacity="0.6" filter="url(#b1)"/>
<path d="M640,800 C680,815 710,815 745,840" stroke-width="5" opacity="0.6" filter="url(#b1)"/>
<path d="M1000,875 C1050,855 1085,832 1105,815" stroke-width="7" opacity="0.5" filter="url(#b2)"/>
</g>
<g fill="#fff" opacity="0.75"><circle cx="643" cy="600" r="3"/><circle cx="698" cy="662" r="4"/><circle cx="652" cy="800" r="2.5"/><circle cx="635" cy="745" r="2.5"/><circle cx="955" cy="878" r="3.5"/><circle cx="630" cy="705" r="2"/><circle cx="675" cy="835" r="2"/></g>
<!--/LEMON-->
<g fill="#232d17">
<rect x="464.4" y="244.9" width="100.9" height="10.8"/>
<rect x="492.1" y="255.7" width="19.0" height="3.4"/>
<path fill-rule="evenodd" d="M471.8,259.1H557.8V297.3H471.8ZM490.1,268.3H539.5V271.6H490.1ZM490.1,276.7H539.5V280.1H490.1ZM490.1,285.5H539.5V288.6H490.1ZM498.2,297.3H557.8V297.3H498.2Z"/>
<polygon points="471.8,297.3 498.2,297.3 498.2,301.1 559.8,301.1 561.2,310.6 541.6,322.1 564.6,334.3 533.4,334.3 514.5,326.1 498.9,334.3 464.4,334.3 487.4,323.4 472.5,316.0 503.6,316.4 514.5,319.0 526.7,312.2 466.4,312.6 475.9,297.7"/>
<path fill-rule="evenodd" d="M589.0,246.9H670.2V334.9H589.0ZM607.2,260.5H651.2V284.2H607.2ZM607.2,297.7H651.2V321.4H607.2Z"/>
<rect x="473.9" y="383.5" width="19.0" height="90.7"/>
<rect x="462.3" y="397.8" width="41.3" height="12.6"/>
<polygon points="463.7,415.4 471.4,415.4 469.1,474.3 462.3,474.3"/>
<polygon points="495.2,415.4 502.0,415.4 503.9,474.3 497.5,474.3"/>
<rect x="526.7" y="383.5" width="18.3" height="6.8"/>
<path fill-rule="evenodd" d="M507.0,389.6H566.6V413.6H507.0ZM524.0,402.5H549.0V413.7H524.0Z"/>
<rect x="507.7" y="420.4" width="57.5" height="12.2"/>
<rect x="528.7" y="432.3" width="18.3" height="42.0"/>
<rect x="514.5" y="462.1" width="14.9" height="12.2"/>
<rect x="587.3" y="383.5" width="17.9" height="90.7"/>
<rect x="578.8" y="397.8" width="34.3" height="12.6"/>
<polygon points="580.1,415.4 584.2,415.4 583.3,474.3 578.8,474.3"/>
<polygon points="607.9,415.4 612.2,415.4 614.4,474.3 609.9,474.3"/>
<rect x="618.1" y="386.2" width="61.6" height="10.8"/>
<rect x="626.2" y="383.5" width="18.3" height="15.6"/>
<rect x="656.0" y="383.5" width="15.6" height="15.6"/>
<path fill-rule="evenodd" d="M618.1,402.5H679.0V418.7H618.1ZM635.0,411.3H638.0V418.7H635.0ZM659.1,411.3H662.1V418.7H659.1ZM638.0,411.3H659.1V413.6H638.0Z"/>
<rect x="618.1" y="423.1" width="60.9" height="9.5"/>
<rect x="633.6" y="432.3" width="27.1" height="42.0"/>
<polygon points="618.1,440.4 643.1,432.6 643.1,439.7 618.1,447.9"/>
<polygon points="618.1,450.2 643.1,442.0 643.1,451.2 618.1,459.4"/>
<polygon points="618.1,461.8 643.1,453.7 643.1,463.4 618.1,472.2"/>
<polygon points="660.7,436.4 677.0,436.4 680.4,440.4 680.4,449.9 677.0,451.2 679.4,474.3 665.5,474.3 662.1,440.4"/>
</g>
</svg>
<!--PTEXT--><style>
.pt{position:absolute;white-space:nowrap;font-weight:bold;line-height:1;}.pk{font-weight:900;}
</style>
<div class="pt" style="left:126px;top:36px;font-size:18.5px;color:#4d3f12;letter-spacing:0.05px;">the days sound.</div>
<div class="pt pk" style="left:112px;top:56px;font-size:17px;color:#d9983a;letter-spacing:2px;">玻璃晴朗，橘子辉煌</div>
<div class="pt pk" style="left:619px;top:25px;font-size:17.5px;color:#5c4a1e;line-height:23px;">薄荷<br>黎明</div>
<div class="pt" style="left:42px;top:178px;font-size:18.5px;color:#5a4612;letter-spacing:-0.05px;">The glass is clear</div>
<div class="pt" style="left:48px;top:201px;font-size:18.5px;color:#5a4612;letter-spacing:0.35px;">and the oranges are brilliant.</div>
<div class="pt" style="left:26px;top:91px;font-size:17.5px;color:#b77d36;letter-spacing:0.8px;transform-origin:0 0;transform:rotate(90deg);">The wind outside the window blows the leaves</div>
<div class="pt pk" style="left:45px;top:346px;font-size:18px;color:#c01a1a;letter-spacing:0.6px;">冰淇淋和冰镇西瓜</div>
<div class="pt pk" style="left:595px;top:346px;font-size:17.5px;color:#5c4a1e;line-height:18.8px;width:18px;white-space:normal;">柠檬的清甜</div>
<div class="pt pk" style="left:217px;top:840px;font-size:18px;color:#335a14;letter-spacing:0.85px;">整个夏天想和你环游全世界</div>
<div class="pt" style="left:84px;top:866px;font-size:18px;color:#22200a;letter-spacing:0.68px;">I want to travel around the world with you all summer</div>
<svg class="abs" style="left:90px;top:365px;" width="40" height="200" viewBox="0 0 40 200"><path d="M18,3 L26,24 L19.6,22 L19,194 L17,194 L16.4,22 L10,24 Z" fill="#e8201c"/></svg>

<!--/PTEXT-->
</div>
<!--POSTER_END-->
  <!--ANN--><div class="abs" style="left:360px;top:722px;font-family:'Liberation Serif',serif;font-size:30.3px;color:#e2231f;letter-spacing:0.8px;white-space:nowrap;line-height:36px;z-index:5;"><span style="display:inline-block;width:20px;">“</span>冰淇淋和冰镇西瓜<span style="display:inline-block;width:32px;padding-left:5px;">”</span>文案的颜色为红色</div><!--/ANN-->
  <!--PANELS--><div id="pg" class="abs" style="left:0;top:-12px;width:1899px;height:1080px;"><div class="abs" style="left:1502px;top:128px;width:20px;height:952px;background:#464646;"></div><div class="abs" style="left:1522px;top:90px;width:5px;height:990px;background:#383838;"></div><div class="abs" style="left:1527px;top:90px;width:372px;height:17px;background:#3c3c3c;"></div><div class="abs" style="left:1558px;top:89px;font-size:15px;color:#d0d0d0;letter-spacing:-2px;font-weight:bold;line-height:17px;">‹‹</div><div class="abs" style="left:1878px;top:89px;font-size:15px;color:#d0d0d0;letter-spacing:-2px;font-weight:bold;line-height:17px;">››</div><div class="abs" style="left:1527px;top:107px;width:51px;height:973px;background:#4a4a4a;"></div><div class="abs" style="left:1578px;top:107px;width:3px;height:973px;background:#383838;"></div><div class="abs" style="left:1538px;top:112px;width:28px;height:3px;background:repeating-linear-gradient(90deg,#5e5e5e 0 1px,transparent 1px 3px);"></div><svg class="abs" style="left:1537px;top:122px" width="32" height="30" viewBox="0 0 32 30"><g fill="#dcdcdc"><rect x="2" y="5" width="3" height="2.5"/><rect x="6.5" y="5" width="5" height="2.5"/><rect x="2" y="9.5" width="3" height="2.5"/><rect x="6.5" y="9.5" width="5" height="2.5"/><rect x="2" y="14" width="3" height="2.5"/><rect x="6.5" y="14" width="5" height="2.5"/><path d="M29,8 L31,10 L18,22 L15,19 Z"/><path d="M14,20 L17,23 C15,27 10,27 7,26 C10,25 11,22 14,20Z"/></g></svg><div class="abs" style="left:1581px;top:107px;width:318px;height:973px;background:#494949;"></div><div class="abs" style="left:1581px;top:107px;width:318px;height:38px;background:#434343;"></div><div class="abs" style="left:1581px;top:108px;width:48px;height:36px;background:#3b3b3b;color:#a8a8a8;font-size:16px;line-height:35px;text-align:center;">3D</div><div class="abs" style="left:1630px;top:107px;width:54px;height:39px;background:#494949;color:#f0f0f0;font-size:15px;font-weight:bold;line-height:36px;text-align:center;">图层</div><div class="abs" style="left:1685px;top:108px;width:53px;height:36px;background:#3b3b3b;color:#b0b0b0;font-size:15px;line-height:35px;text-align:center;">通道</div><div class="abs" style="left:1878px;top:120px;width:14px;height:11px;background:repeating-linear-gradient(180deg,#c8c8c8 0 1.6px,transparent 1.6px 3.2px);"></div><div class="abs" style="left:1581px;top:189px;width:318px;height:1px;background:#3e3e3e;"></div><div class="abs" style="left:1581px;top:227px;width:318px;height:1px;background:#3e3e3e;"></div><svg class="abs" style="left:1836px;top:159px" width="18" height="20" viewBox="0 0 18 20"><path d="M6,1 H12 L16,5 V14 H6 Z" stroke="#8a8a8a" stroke-width="1.4" fill="none"/><rect x="1" y="9" width="9" height="9" fill="#8a8a8a"/></svg><div class="abs" style="left:1872px;top:157px;width:12px;height:24px;border-radius:6px;background:#3d3d3d;"></div><div class="abs" style="left:1872px;top:157px;width:12px;height:12px;border-radius:6px;background:#9a9a9a;"></div><div class="abs" style="left:1800px;top:196px;width:84px;height:25px;background:#424242;border:1px solid #555;border-radius:3px;color:#e8e8e8;font-size:16px;line-height:23px;"><span style="position:absolute;left:31px;top:0;">0%</span><span style="position:absolute;left:62px;top:0;width:21px;height:23px;border-left:1px solid #555;"><svg style="position:absolute;left:5px;top:9px" width="11" height="7" viewBox="0 0 11 7"><path d="M1,1 L5.5,5.5 L10,1" stroke="#e0e0e0" stroke-width="1.8" fill="none"/></svg></span></div><div class="abs" style="left:1800px;top:235px;width:84px;height:25px;background:#424242;border:1px solid #555;border-radius:3px;color:#e8e8e8;font-size:16px;line-height:23px;"><span style="position:absolute;left:31px;top:0;">0%</span><span style="position:absolute;left:62px;top:0;width:21px;height:23px;border-left:1px solid #555;"><svg style="position:absolute;left:5px;top:9px" width="11" height="7" viewBox="0 0 11 7"><path d="M1,1 L5.5,5.5 L10,1" stroke="#e0e0e0" stroke-width="1.8" fill="none"/></svg></span></div><div class="abs" style="left:1878px;top:266px;width:21px;height:802px;background:#454545;"></div><div class="abs" style="left:1581px;top:521px;width:297px;height:55px;background:#5f5f5f;"></div><div class="abs" style="left:1835px;top:541px;font-size:15px;color:#f0f0f0;">mer</div><div class="abs" style="left:1581px;top:299.1px;width:297px;height:1px;background:#3f3f3f;"></div><div class="abs" style="left:1581px;top:354.5px;width:297px;height:1px;background:#3f3f3f;"></div><div class="abs" style="left:1581px;top:409.9px;width:297px;height:1px;background:#3f3f3f;"></div><div class="abs" style="left:1581px;top:465.3px;width:297px;height:1px;background:#3f3f3f;"></div><div class="abs" style="left:1581px;top:520.7px;width:297px;height:1px;background:#3f3f3f;"></div><div class="abs" style="left:1581px;top:576.1px;width:297px;height:1px;background:#3f3f3f;"></div><div class="abs" style="left:1581px;top:631.5px;width:297px;height:1px;background:#3f3f3f;"></div><div class="abs" style="left:1581px;top:686.9px;width:297px;height:1px;background:#3f3f3f;"></div><div class="abs" style="left:1581px;top:742.3px;width:297px;height:1px;background:#3f3f3f;"></div><div class="abs" style="left:1581px;top:797.7px;width:297px;height:1px;background:#3f3f3f;"></div><div class="abs" style="left:1581px;top:852.3px;width:297px;height:1px;background:#3f3f3f;"></div><div class="abs" style="left:1581px;top:885.5px;width:297px;height:1px;background:#3f3f3f;"></div><div class="abs" style="left:1581px;top:919.0px;width:297px;height:1px;background:#3f3f3f;"></div><div class="abs" style="left:1581px;top:974.3px;width:297px;height:1px;background:#3f3f3f;"></div><div class="abs" style="left:1620px;top:266px;width:1px;height:708px;background:#3f3f3f;"></div><svg class="abs" style="left:1591px;top:652px" width="20" height="13" viewBox="0 0 20 13"><path d="M1,6.5 C4,1 16,1 19,6.5 C16,12 4,12 1,6.5Z" fill="#dcdcdc"/><circle cx="10" cy="6.5" r="3.6" fill="#494949"/><circle cx="10" cy="6.5" r="1.9" fill="#dcdcdc"/></svg><div class="abs" style="left:1659px;top:644px;font-family:'Liberation Serif',serif;font-size:27px;font-weight:bold;color:#dcdcdc;line-height:28px;width:20px;text-align:center;">T</div><div class="abs" style="left:1701px;top:649.2px;font-size:15px;color:#c4c4c4;white-space:nowrap;line-height:20px;letter-spacing:0.2px;">The wind o...he leaves</div><svg class="abs" style="left:1591px;top:708px" width="20" height="13" viewBox="0 0 20 13"><path d="M1,6.5 C4,1 16,1 19,6.5 C16,12 4,12 1,6.5Z" fill="#dcdcdc"/><circle cx="10" cy="6.5" r="3.6" fill="#494949"/><circle cx="10" cy="6.5" r="1.9" fill="#dcdcdc"/></svg><div class="abs" style="left:1659px;top:699px;font-family:'Liberation Serif',serif;font-size:27px;font-weight:bold;color:#dcdcdc;line-height:28px;width:20px;text-align:center;">T</div><div class="abs" style="left:1701px;top:704.6px;font-size:15px;color:#ececec;white-space:nowrap;line-height:20px;letter-spacing:0.2px;">the days sound.</div><svg class="abs" style="left:1591px;top:763px" width="20" height="13" viewBox="0 0 20 13"><path d="M1,6.5 C4,1 16,1 19,6.5 C16,12 4,12 1,6.5Z" fill="#dcdcdc"/><circle cx="10" cy="6.5" r="3.6" fill="#494949"/><circle cx="10" cy="6.5" r="1.9" fill="#dcdcdc"/></svg><div class="abs" style="left:1659px;top:755px;font-family:'Liberation Serif',serif;font-size:27px;font-weight:bold;color:#dcdcdc;line-height:28px;width:20px;text-align:center;">T</div><div class="abs" style="left:1701px;top:760.0px;font-size:15px;color:#ececec;white-space:nowrap;line-height:20px;letter-spacing:0.2px;">冰淇淋和冰镇西瓜</div><svg class="abs" style="left:1591px;top:818px" width="20" height="13" viewBox="0 0 20 13"><path d="M1,6.5 C4,1 16,1 19,6.5 C16,12 4,12 1,6.5Z" fill="#dcdcdc"/><circle cx="10" cy="6.5" r="3.6" fill="#494949"/><circle cx="10" cy="6.5" r="1.9" fill="#dcdcdc"/></svg><div class="abs" style="left:1659px;top:810px;font-family:'Liberation Serif',serif;font-size:27px;font-weight:bold;color:#dcdcdc;line-height:28px;width:20px;text-align:center;">T</div><div class="abs" style="left:1701px;top:815.4px;font-size:15px;color:#ececec;white-space:nowrap;line-height:20px;letter-spacing:0.2px;">The glass i... brilliant.</div><svg class="abs" style="left:1591px;top:862px" width="20" height="13" viewBox="0 0 20 13"><path d="M1,6.5 C4,1 16,1 19,6.5 C16,12 4,12 1,6.5Z" fill="#dcdcdc"/><circle cx="10" cy="6.5" r="3.6" fill="#494949"/><circle cx="10" cy="6.5" r="1.9" fill="#dcdcdc"/></svg><svg class="abs" style="left:1626px;top:862.1px" width="8" height="14" viewBox="0 0 8 14"><path d="M2,1 L6,7 L2,13" stroke="#c8c8c8" stroke-width="1.4" fill="none"/></svg><svg class="abs" style="left:1641px;top:861.1px" width="21" height="16" viewBox="0 0 21 16"><path d="M1,1 H8 L10,3 H20 V15 H1 Z" fill="#d8d8d8"/></svg><div class="abs" style="left:1676px;top:859.1px;font-size:15px;color:#ececec;line-height:20px;">柠檬</div><svg class="abs" style="left:1591px;top:895px" width="20" height="13" viewBox="0 0 20 13"><path d="M1,6.5 C4,1 16,1 19,6.5 C16,12 4,12 1,6.5Z" fill="#dcdcdc"/><circle cx="10" cy="6.5" r="3.6" fill="#494949"/><circle cx="10" cy="6.5" r="1.9" fill="#dcdcdc"/></svg><svg class="abs" style="left:1626px;top:895.3px" width="8" height="14" viewBox="0 0 8 14"><path d="M2,1 L6,7 L2,13" stroke="#c8c8c8" stroke-width="1.4" fill="none"/></svg><svg class="abs" style="left:1641px;top:894.3px" width="21" height="16" viewBox="0 0 21 16"><path d="M1,1 H8 L10,3 H20 V15 H1 Z" fill="#d8d8d8"/></svg><div class="abs" style="left:1676px;top:892.3px;font-size:15px;color:#ececec;line-height:20px;">背景</div><div class="abs" style="left:1593px;top:940px;width:15px;height:15px;border:1px solid #3c3c3c;background:#464646;"></div><div class="abs" style="left:1626px;top:925px;width:34px;height:43px;background:#fefefe;border:1px solid #222;border-radius:2px;"></div><div class="abs" style="left:1670px;top:937px;font-size:15px;color:#ececec;line-height:20px;font-weight:bold;">背景</div><svg class="abs" style="left:1841px;top:937px" width="16" height="18" viewBox="0 0 16 18"><rect x="1.5" y="7.5" width="13" height="9" rx="1.5" stroke="#dcdcdc" stroke-width="1.5" fill="none"/><path d="M4.5,7.5 V5 a3.5,3.5 0 0 1 7,0 V7.5" stroke="#dcdcdc" stroke-width="1.5" fill="none"/><rect x="6.8" y="10.5" width="2.4" height="2.6" fill="#dcdcdc"/></svg><div class="abs" style="left:1581px;top:1068px;width:318px;height:12px;background:#494949;border-top:1px solid #3c3c3c;"></div><div class="abs" style="left:1700px;top:1076px;width:15px;height:4px;background:#9a9a9a;opacity:0.7"></div><div class="abs" style="left:1734px;top:1076px;width:15px;height:4px;background:#9a9a9a;opacity:0.7"></div><div class="abs" style="left:1771px;top:1076px;width:15px;height:4px;background:#9a9a9a;opacity:0.7"></div><div class="abs" style="left:1812px;top:1076px;width:15px;height:4px;background:#9a9a9a;opacity:0.7"></div><div class="abs" style="left:1860px;top:1076px;width:15px;height:4px;background:#9a9a9a;opacity:0.7"></div><div class="abs" style="left:0px;top:1057px;width:601px;height:23px;background:#3d3d3d;border-top-right-radius:6px;box-shadow:0 -1px 0 #2a2a2a;"></div><div class="abs" style="left:0;top:1077px;width:50px;height:3px;background:#4a4a4a;"></div><div class="abs" style="left:580px;top:1057px;font-size:15px;color:#d0d0d0;letter-spacing:-2px;font-weight:bold;line-height:20px;">‹‹</div></div><!--/PANELS-->
  <!--WM--><svg class="abs" style="left:1680px;top:-2px;z-index:20" width="230" height="90" viewBox="1680 10 230 90"><g fill="none" stroke="#a2a2a2" stroke-width="3" stroke-linecap="round" stroke-linejoin="round" opacity="0.85"><rect x="1705.6" y="26.9" width="53.8" height="39.4" rx="7"/><polyline points="1713.1,26.9 1717.5,21.5 1721.9,26.9"/><polyline points="1743.8,26.9 1748.1,21.5 1752.5,26.9"/><path d="M1690.6,28.8 C1696.2,28.8 1698.8,32.5 1698.8,37.5 L1698.8,56.2 C1698.8,62.5 1703.8,66.2 1711.2,66.2"/><polyline points="1721.9,30.6 1744.4,30.6"/><polyline points="1721.9,35.0 1744.4,35.0"/><polyline points="1721.9,39.0 1744.4,39.0"/><polyline points="1733.1,30.6 1733.1,39.0"/><polyline points="1706.9,50.6 1712.8,50.6"/><polyline points="1751.5,50.6 1758.1,50.6"/><polyline points="1706.9,54.8 1712.8,54.8"/><polyline points="1751.5,54.8 1758.1,54.8"/><polygon points="1728.8,46.2 1738.8,51.5 1728.8,56.9" fill="#a2a2a2" stroke-width="1"/><polyline points="1781.9,21.5 1781.9,27.5"/><polyline points="1781.9,24.4 1800.0,24.4"/><polyline points="1803.1,30.6 1768.1,30.6 1767.5,47.5 1764.4,65.0"/><polyline points="1771.2,39.0 1801.9,39.0"/><polyline points="1778.1,30.6 1778.1,46.5 1801.2,46.5"/><polyline points="1772.5,65.0 1773.1,53.1 1796.9,53.1 1797.5,62.5 1803.8,65.0"/><polyline points="1813.1,23.5 1813.1,28.8"/><polyline points="1810.0,35.0 1814.8,35.0 1814.8,63.8 1823.8,60.0"/><rect x="1823.8" y="23.5" width="25.0" height="20.2" rx="2"/><polyline points="1836.2,23.5 1836.2,66.2"/><polyline points="1823.8,33.8 1848.8,33.8"/><polyline points="1818.8,50.6 1850.0,50.6"/><polyline points="1835.0,52.5 1821.2,64.0"/><polyline points="1837.8,52.5 1849.0,65.0"/><polyline points="1858.8,66.2 1858.8,23.1 1897.5,23.1 1897.5,63.8 1892.5,66.0"/><polyline points="1863.8,31.2 1875.0,56.5"/><polyline points="1875.0,31.2 1863.8,56.5"/><polyline points="1881.2,31.2 1892.5,56.5"/><polyline points="1892.5,31.2 1881.2,56.5"/></g></svg><!--/WM-->
  <!--DIALOG--><div id="dlg" class="abs" style="left:1133px;top:141px;width:699px;height:502px;border-radius:12px;background:#4a4a4a;overflow:hidden;box-shadow:0 6px 24px rgba(0,0,0,0.55),0 0 0 1px rgba(30,30,30,0.6);"><div class="abs" style="left:0;top:0;width:699px;height:37px;background:#dddbd9;border-bottom:1px solid #b8b6b4;color:#2e2e2e;font-size:17px;line-height:36px;text-align:center;letter-spacing:0.5px;"><span style="position:relative;left:-1px">拾色器（文本颜色）</span></div><div class="abs" style="left:14px;top:79px;width:344px;height:344px;background:linear-gradient(180deg,rgba(0,0,0,0) 0%,rgba(0,0,0,1) 100%),linear-gradient(90deg,#ffffff 0%,#ff0000 100%);"></div><div class="abs" style="left:9px;top:415px;width:13px;height:13px;border-radius:50%;border:1.6px solid #fff;clip-path:inset(0 0 4px 5px);"></div><div class="abs" style="left:374px;top:79px;width:27px;height:344px;background:linear-gradient(180deg,#ff0000 0%,#ff00ff 16.7%,#0000ff 33.3%,#00ffff 50%,#00ff00 66.7%,#ffff00 83.3%,#ff0000 100%);"></div><svg class="abs" style="left:360px;top:417px" width="56" height="13" viewBox="0 0 56 13"><path d="M1,2.5 a1.5,1.5 0 0 1 1.5,-1.5 H6 L11,6.5 L6,12 H2.5 a1.5,1.5 0 0 1 -1.5,-1.5Z" fill="#f4f4f4"/><path d="M53,2.5 a1.5,1.5 0 0 0 -1.5,-1.5 H48 L43,6.5 L48,12 H51.5 a1.5,1.5 0 0 0 1.5,-1.5Z" fill="#f4f4f4"/></svg><div class="abs" style="left:416px;top:81px;width:80px;text-align:center;font-size:16px;color:#e4e4e4;line-height:20px;">新的</div><div class="abs" style="left:416px;top:103px;width:81px;height:44px;background:#040404;border:1px solid #2a2a2a;border-bottom:none;"></div><div class="abs" style="left:416px;top:147px;width:81px;height:47px;background:#ffffff;border:1px solid #e8e8e8;"></div><div class="abs" style="left:416px;top:196px;width:80px;text-align:center;font-size:16px;color:#e4e4e4;line-height:20px;">当前</div><div class="abs" style="left:561px;top:51px;width:124px;height:34px;border-radius:17px;border:2px solid #d2d2d2;color:#f0f0f0;font-size:16px;font-weight:bold;line-height:30px;text-align:center;">确定</div><div class="abs" style="left:561px;top:98px;width:124px;height:34px;border-radius:17px;border:1.5px solid #6e6e6e;color:#f0f0f0;font-size:16px;font-weight:bold;line-height:30px;text-align:center;">取消</div><div class="abs" style="left:561px;top:155px;width:124px;height:34px;border-radius:17px;border:1.5px solid #6e6e6e;color:#f0f0f0;font-size:16px;font-weight:bold;line-height:30px;text-align:center;">添加到色板</div><div class="abs" style="left:561px;top:211px;width:124px;height:34px;border-radius:17px;border:1.5px solid #6e6e6e;color:#f0f0f0;font-size:16px;font-weight:bold;line-height:30px;text-align:center;">颜色库</div><div class="abs" style="left:416px;top:270.5px;width:18px;height:18px;border-radius:50%;background:#f2f2f2;"></div><div class="abs" style="left:421.5px;top:276.0px;width:7px;height:7px;border-radius:50%;background:#3a3a3a;"></div><div class="abs" style="left:446px;top:268.5px;font-size:17px;color:#e6e6e6;line-height:22px;white-space:nowrap;">H:</div><div class="abs" style="left:478px;top:267.5px;width:45px;height:24px;background:#3e3e3e;border:1px solid #5c5c5c;color:#fff;font-size:17px;line-height:22px;padding-left:4px;">0</div><div class="abs" style="left:528px;top:268.5px;font-size:17px;color:#e6e6e6;line-height:22px;white-space:nowrap;width:18px;text-align:center;">度</div><div class="abs" style="left:558.5px;top:271.0px;width:17px;height:17px;border-radius:50%;background:#434343;border:1.5px solid #6a6a6a;"></div><div class="abs" style="left:588px;top:268.5px;font-size:17px;color:#e6e6e6;line-height:22px;white-space:nowrap;">L:</div><div class="abs" style="left:617px;top:267.5px;width:57px;height:24px;background:#3e3e3e;border:1px solid #5c5c5c;color:#fff;font-size:17px;line-height:22px;padding-left:4px;">0</div><div class="abs" style="left:416.5px;top:302.0px;width:17px;height:17px;border-radius:50%;background:#434343;border:1.5px solid #6a6a6a;"></div><div class="abs" style="left:446px;top:299.5px;font-size:17px;color:#e6e6e6;line-height:22px;white-space:nowrap;">S:</div><div class="abs" style="left:478px;top:298.5px;width:45px;height:24px;background:#3e3e3e;border:1px solid #5c5c5c;color:#fff;font-size:17px;line-height:22px;padding-left:4px;">0</div><div class="abs" style="left:528px;top:299.5px;font-size:17px;color:#e6e6e6;line-height:22px;white-space:nowrap;width:18px;text-align:center;">%</div><div class="abs" style="left:558.5px;top:302.0px;width:17px;height:17px;border-radius:50%;background:#434343;border:1.5px solid #6a6a6a;"></div><div class="abs" style="left:588px;top:299.5px;font-size:17px;color:#e6e6e6;line-height:22px;white-space:nowrap;">a:</div><div class="abs" style="left:617px;top:298.5px;width:57px;height:24px;background:#3e3e3e;border:1px solid #5c5c5c;color:#fff;font-size:17px;line-height:22px;padding-left:4px;">0</div><div class="abs" style="left:416.5px;top:332.5px;width:17px;height:17px;border-radius:50%;background:#434343;border:1.5px solid #6a6a6a;"></div><div class="abs" style="left:446px;top:330px;font-size:17px;color:#e6e6e6;line-height:22px;white-space:nowrap;">B:</div><div class="abs" style="left:478px;top:329px;width:45px;height:24px;background:#3e3e3e;border:1px solid #5c5c5c;color:#fff;font-size:17px;line-height:22px;padding-left:4px;">0</div><div class="abs" style="left:528px;top:330px;font-size:17px;color:#e6e6e6;line-height:22px;white-space:nowrap;width:18px;text-align:center;">%</div><div class="abs" style="left:558.5px;top:332.5px;width:17px;height:17px;border-radius:50%;background:#434343;border:1.5px solid #6a6a6a;"></div><div class="abs" style="left:588px;top:330px;font-size:17px;color:#e6e6e6;line-height:22px;white-space:nowrap;">b:</div><div class="abs" style="left:617px;top:329px;width:57px;height:24px;background:#3e3e3e;border:1px solid #5c5c5c;color:#fff;font-size:17px;line-height:22px;padding-left:4px;">0</div><div class="abs" style="left:416.5px;top:368.5px;width:17px;height:17px;border-radius:50%;background:#434343;border:1.5px solid #6a6a6a;"></div><div class="abs" style="left:446px;top:366px;font-size:17px;color:#e6e6e6;line-height:22px;white-space:nowrap;">R:</div><div class="abs" style="left:478px;top:365px;width:45px;height:24px;background:#3e3e3e;border:1px solid #5c5c5c;color:#fff;font-size:17px;line-height:22px;padding-left:4px;">0</div><div class="abs" style="left:583px;top:366px;font-size:17px;color:#e6e6e6;line-height:22px;white-space:nowrap;width:28px;text-align:right;">C:</div><div class="abs" style="left:617px;top:365px;width:46px;height:24px;background:#3e3e3e;border:1px solid #5c5c5c;color:#fff;font-size:17px;line-height:22px;padding-left:4px;">93</div><div class="abs" style="left:668px;top:366px;font-size:17px;color:#e6e6e6;line-height:22px;white-space:nowrap;">%</div><div class="abs" style="left:416.5px;top:399.5px;width:17px;height:17px;border-radius:50%;background:#434343;border:1.5px solid #6a6a6a;"></div><div class="abs" style="left:446px;top:397px;font-size:17px;color:#e6e6e6;line-height:22px;white-space:nowrap;">G:</div><div class="abs" style="left:478px;top:396px;width:45px;height:24px;background:#3e3e3e;border:1px solid #5c5c5c;color:#fff;font-size:17px;line-height:22px;padding-left:4px;">0</div><div class="abs" style="left:583px;top:397px;font-size:17px;color:#e6e6e6;line-height:22px;white-space:nowrap;width:28px;text-align:right;">M:</div><div class="abs" style="left:617px;top:396px;width:46px;height:24px;background:#3e3e3e;border:1px solid #5c5c5c;color:#fff;font-size:17px;line-height:22px;padding-left:4px;">88</div><div class="abs" style="left:668px;top:397px;font-size:17px;color:#e6e6e6;line-height:22px;white-space:nowrap;">%</div><div class="abs" style="left:416.5px;top:430.5px;width:17px;height:17px;border-radius:50%;background:#434343;border:1.5px solid #6a6a6a;"></div><div class="abs" style="left:446px;top:428px;font-size:17px;color:#e6e6e6;line-height:22px;white-space:nowrap;">B:</div><div class="abs" style="left:478px;top:427px;width:45px;height:24px;background:#3e3e3e;border:1px solid #5c5c5c;color:#fff;font-size:17px;line-height:22px;padding-left:4px;">0</div><div class="abs" style="left:583px;top:428px;font-size:17px;color:#e6e6e6;line-height:22px;white-space:nowrap;width:28px;text-align:right;">Y:</div><div class="abs" style="left:617px;top:427px;width:46px;height:24px;background:#3e3e3e;border:1px solid #5c5c5c;color:#fff;font-size:17px;line-height:22px;padding-left:4px;">89</div><div class="abs" style="left:668px;top:428px;font-size:17px;color:#e6e6e6;line-height:22px;white-space:nowrap;">%</div><div class="abs" style="left:583px;top:459px;font-size:17px;color:#e6e6e6;line-height:22px;white-space:nowrap;width:28px;text-align:right;">K:</div><div class="abs" style="left:617px;top:458px;width:46px;height:24px;background:#3e3e3e;border:1px solid #5c5c5c;color:#fff;font-size:17px;line-height:22px;padding-left:4px;">80</div><div class="abs" style="left:668px;top:459px;font-size:17px;color:#e6e6e6;line-height:22px;white-space:nowrap;">%</div><div class="abs" style="left:416px;top:464px;font-size:17px;color:#e6e6e6;line-height:22px;white-space:nowrap;">#</div><div class="abs" style="left:434px;top:463px;width:111px;height:24px;background:#3e3e3e;border:1.5px solid #3f68b0;"></div><div class="abs" style="left:437px;top:465px;width:63px;height:20px;background:#2f66c8;color:#fff;font-size:17px;line-height:20px;padding-left:1px;letter-spacing:0.3px;">000000</div><div class="abs" style="left:15px;top:443px;width:16px;height:16px;border:1.5px solid #8a8a8a;border-radius:2px;background:#4a4a4a;"></div><div class="abs" style="left:44px;top:440px;font-size:17px;color:#e6e6e6;line-height:22px;white-space:nowrap;">只有 Web 颜色</div></div><svg class="abs" style="left:1775px;top:238px" width="22" height="30" viewBox="0 0 22 30"><path d="M2,2 L2,22 L7,17.5 L10.5,26 L14,24.5 L10.5,16.5 L17,16.5 Z" fill="#111" stroke="#fff" stroke-width="1.6" stroke-linejoin="round"/></svg><!--/DIALOG-->
</div>
</body>
</html>
